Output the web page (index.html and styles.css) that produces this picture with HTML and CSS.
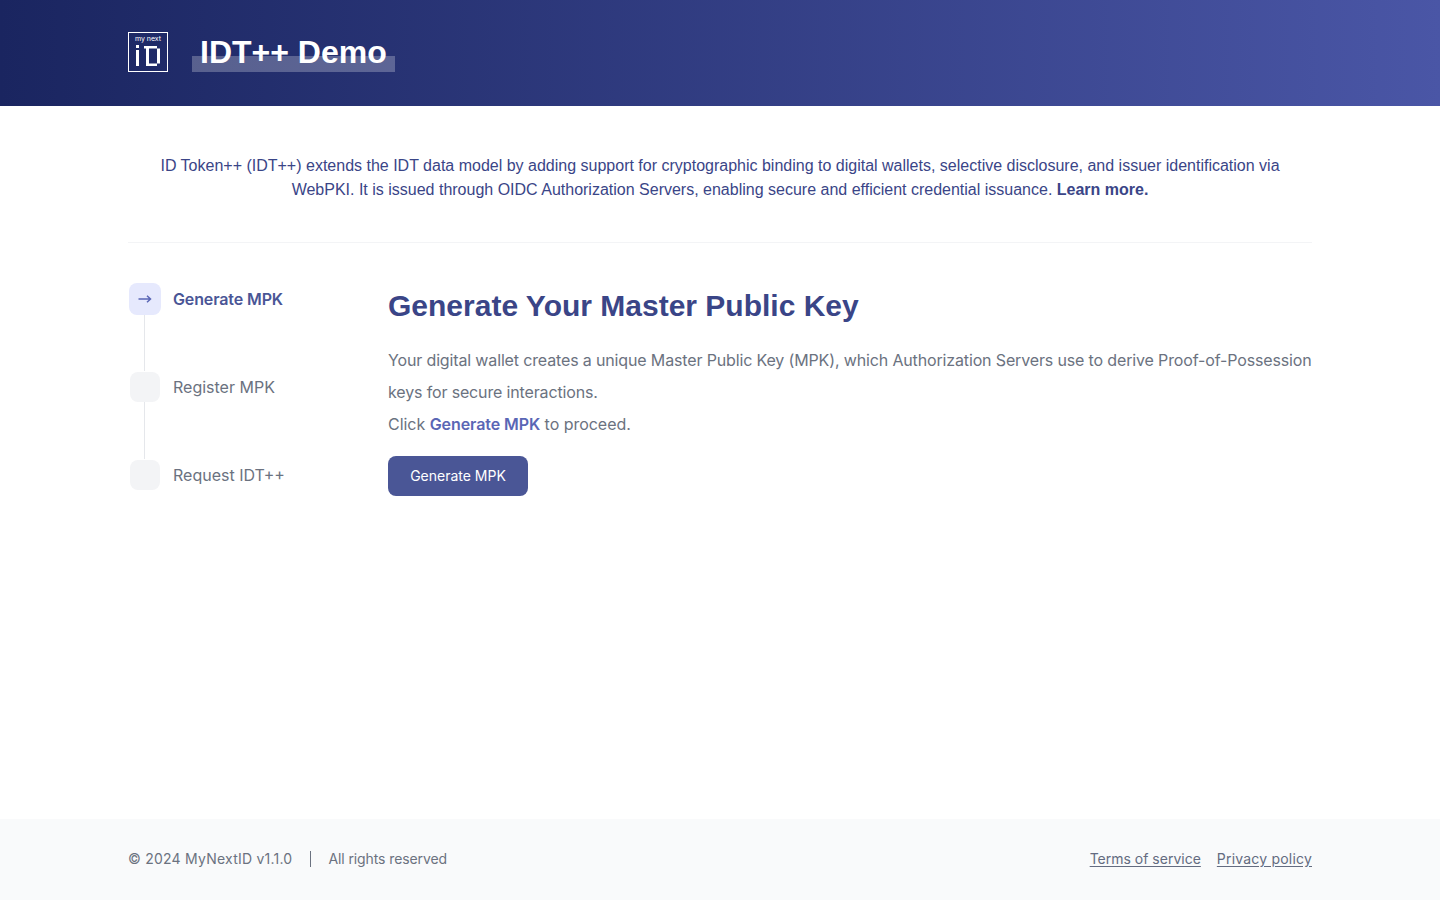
FILE: index.html
```html
<!DOCTYPE html>
<html lang="en">
<head>
    <meta charset="UTF-8">
    <meta name="viewport" content="width=device-width, initial-scale=1.0">
    <title>IDT++ Demo</title>
    <link rel="stylesheet" href="styles.css">
</head>
<body>
    <header class="site-header">
        <div class="container header-inner">
            <svg class="logo" viewBox="0 0 40 40" width="40" height="40">
                <rect x="0.5" y="0.5" width="39" height="39" fill="none" stroke="#fff"/>
                <text x="20" y="8.500" text-anchor="middle" class="logo-text">my next</text>
                <rect x="8" y="13" width="3" height="3" fill="#fff"/>
                <rect x="8" y="18" width="3" height="16" fill="#fff"/>
                <rect x="16" y="14" width="13" height="2.500" fill="#fff"/>
                <rect x="18" y="16" width="3" height="18" fill="#fff"/>
                <rect x="21" y="31.500" width="8" height="2.500" fill="#fff"/>
                <rect x="29" y="16.500" width="3" height="15" fill="#fff"/>
            </svg>
            <h1 class="site-title"><span>IDT++ Demo</span></h1>
        </div>
    </header>

    <main class="container main">
        <p class="intro">
            ID Token++ (IDT++) extends the IDT data model by adding support for cryptographic binding to digital wallets, selective disclosure, and issuer identification via WebPKI. It is issued through OIDC Authorization Servers, enabling secure and efficient credential issuance.
            <a href="#">Learn more.</a>
        </p>

        <div class="flow">
            <ol class="steps">
                <li class="step active">
                    <div class="step-track">
                        <span class="step-icon">
                            <svg viewBox="0 0 16 16" width="16" height="16">
                                <path d="M1.500 8h12M10 4.800l3.500 3.200-3.500 3.200" fill="none" stroke="#5a66b5" stroke-width="1.500"/>
                            </svg>
                        </span>
                        <span class="step-line"></span>
                    </div>
                    <span class="step-label">Generate MPK</span>
                </li>
                <li class="step">
                    <div class="step-track">
                        <span class="step-icon"></span>
                        <span class="step-line"></span>
                    </div>
                    <span class="step-label">Register MPK</span>
                </li>
                <li class="step">
                    <div class="step-track">
                        <span class="step-icon"></span>
                    </div>
                    <span class="step-label">Request IDT++</span>
                </li>
            </ol>

            <section class="panel">
                <h2>Generate Your Master Public Key</h2>
                <p class="panel-lead">Your digital wallet creates a unique Master Public Key (MPK), which Authorization Servers use to derive Proof-of-Possession keys for secure interactions.</p>
                <p>Click <strong>Generate MPK</strong> to proceed.</p>
                <button class="btn" type="button">Generate MPK</button>
            </section>
        </div>
    </main>

    <footer class="site-footer">
        <div class="container footer-inner">
            <div class="footer-left">
                <span class="footer-copy">© 2024 MyNextID v1.1.0</span>
                <span class="footer-sep"></span>
                <span class="footer-rights">All rights reserved</span>
            </div>
            <div class="footer-links">
                <a href="#">Terms of service</a>
                <a href="#" class="privacy-link">Privacy policy</a>
            </div>
        </div>
    </footer>
</body>
</html>
```

FILE: styles.css
```css
* {
    box-sizing: border-box;
}
body {
    font-family: Inter, sans-serif;
    display: flex;
    flex-direction: column;
    min-height: 100vh;
    margin: 0;
    background-color: white;
    color: #6b7280;
}
.container {
    width: 1184px;
    margin: 0 auto;
}
.site-header {
    height: 106px;
    background: linear-gradient(90deg, #1a2560 0%, #4a56a6 100%);
}
.header-inner {
    display: flex;
    align-items: center;
    gap: 24px;
    height: 100%;
    padding-bottom: 2px;
}
.logo {
    display: block;
    flex-shrink: 0;
}
.logo-text {
    font-family: Inter, sans-serif;
    font-size: 7px;
    fill: white;
}
.site-title {
    margin: 0;
    font-family: "Liberation Sans", Arial, sans-serif;
    font-size: 32px;
    line-height: 40px;
    font-weight: 700;
    color: white;
}
.site-title span {
    display: block;
    padding: 0 8px;
    background: linear-gradient(transparent 60%, rgba(255,255,255,0.25) 60%);
}
.main {
    flex: 1;
}
.intro {
    margin: 0;
    padding: 48px 0 40px;
    font-family: "Liberation Sans", Arial, sans-serif;
    font-size: 16px;
    line-height: 24px;
    text-align: center;
    color: #3a4587;
    border-bottom: 1px solid #f3f4f6;
}
.intro a {
    color: #3a4587;
    font-weight: 700;
    text-decoration: none;
}
.flow {
    display: flex;
    padding-top: 40px;
}
.steps {
    width: 260px;
    flex-shrink: 0;
    margin: 0;
    padding: 0;
    list-style: none;
}
.step {
    display: flex;
    gap: 11px;
    height: 88px;
}
.step-track {
    display: flex;
    flex-direction: column;
    align-items: center;
    width: 34px;
}
.step-icon {
    display: flex;
    align-items: center;
    justify-content: center;
    flex-shrink: 0;
    width: 30px;
    height: 30px;
    margin-top: 1px;
    background-color: #f3f4f6;
    border-radius: 8px;
}
.step-line {
    flex: 1;
    width: 1px;
    margin-right: 2px;
    background-color: #e5e7eb;
}
.step-label {
    font-size: 16px;
    line-height: 32px;
    color: #6b7280;
}
.step.active .step-icon {
    width: 32px;
    height: 32px;
    margin-top: 0;
    background-color: #e6e9fd;
}
.step.active .step-label {
    font-weight: 600;
    letter-spacing: -0.12px;
    color: #4a5696;
}
.panel {
    flex: 1;
}
.panel h2 {
    margin: 0 0 20px;
    padding-top: 5px;
    font-family: "Liberation Sans", Arial, sans-serif;
    font-size: 30px;
    line-height: 36px;
    font-weight: 700;
    color: #3a4587;
}
.panel p {
    margin: 0;
    font-size: 16px;
    line-height: 32px;
    letter-spacing: -0.03px;
    color: #6b7280;
}
.panel .panel-lead {
    letter-spacing: -0.145px;
}
.panel strong {
    font-weight: 600;
    letter-spacing: -0.08px;
    color: #5a66b5;
}
.btn {
    display: block;
    width: 140px;
    height: 40px;
    margin-top: 16px;
    padding: 0 0 2px;
    border: none;
    border-radius: 8px;
    background-color: #4a5696;
    color: white;
    font-family: Inter, sans-serif;
    font-size: 14px;
}
.site-footer {
    height: 81px;
    background-color: #f9fafb;
    font-size: 14px;
}
.footer-inner {
    display: flex;
    align-items: center;
    justify-content: space-between;
    height: 100%;
    padding-bottom: 2px;
}
.footer-left {
    display: flex;
    align-items: center;
    gap: 17px;
}
.footer-copy {
    padding-right: 1px;
    letter-spacing: 0.23px;
}
.footer-rights {
    letter-spacing: -0.1px;
}
.footer-sep {
    width: 1px;
    height: 16px;
    background-color: #6b7280;
}
.footer-links {
    display: flex;
    gap: 16px;
}
.footer-links a {
    color: #636b80;
    text-decoration: underline;
    text-underline-offset: 2px;
}
.privacy-link {
    letter-spacing: 0.2px;
}
```
